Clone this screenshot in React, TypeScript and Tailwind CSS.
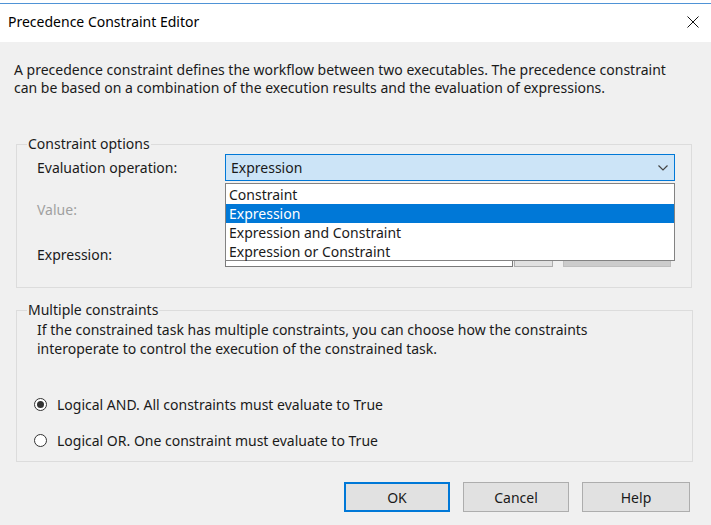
import { useState } from 'react'

const options = ['Constraint', 'Expression', 'Expression and Constraint', 'Expression or Constraint']

function Radio({ checked, label }: { checked: boolean; label: string }) {
  return (
    <div className="flex items-center h-[20px]">
      <span className="ml-[17px] w-[13px] h-[13px] rounded-full border border-[#333] bg-white flex items-center justify-center">
        {checked && <span className="w-[7px] h-[7px] rounded-full bg-[#333]"></span>}
      </span>
      <span className="ml-[10px]">{label}</span>
    </div>
  )
}

export default function App() {
  const [selected] = useState('Expression')

  return (
    <div
      className="w-[711px] h-[525px] bg-white overflow-hidden flex flex-col text-[14px] text-[#1a1a1a]"
      style={{ fontFamily: '"Noto Sans", "Open Sans", sans-serif' }}
    >
      {/* Title bar */}
      <div className="mt-[3px] border-t border-[#4f93d6] h-[39px] flex items-center justify-between pl-[8px] pr-[12px]">
        <span className="text-black -mt-[3px]">Precedence Constraint Editor</span>
        <svg width="12" height="12" viewBox="0 0 12 12" className="-mt-[3px]">
          <path d="M0.5 0.5 L11.5 11.5 M11.5 0.5 L0.5 11.5" stroke="#111" strokeWidth="1" />
        </svg>
      </div>

      {/* Body */}
      <div className="flex-1 bg-[#f0f0f0] flex flex-col">
        <p className="pt-[19px] px-[14px] leading-[18px]">
          A precedence constraint defines the workflow between two executables. The precedence constraint
          <br />
          can be based on a combination of the execution results and the evaluation of expressions.
        </p>

        {/* Constraint options */}
        <fieldset className="mt-[38px] mx-[16px] w-[676px] h-[153px] border border-[#dcdcdc] relative">
          <legend className="ml-[10px] px-[1px] leading-[18px]">Constraint options</legend>
          <div className="flex items-center h-[27px] mt-[1px]">
            <span className="ml-[20px] w-[188px]">Evaluation operation:</span>
            <div className="w-[450px] h-[27px] bg-[#cce4f7] border border-[#0078d7] flex items-center justify-between pl-[5px] pr-[6px]">
              <span>{selected}</span>
              <svg width="10" height="6" viewBox="0 0 10 6">
                <path d="M0.5 0.5 L5 5 L9.5 0.5" stroke="#444" strokeWidth="1.2" fill="none" />
              </svg>
            </div>
          </div>
          <div className="flex items-center h-[20px] mt-[18px]">
            <span className="ml-[20px] text-[#a0a0a0]">Value:</span>
          </div>
          <div className="flex items-center h-[26px] mt-[22px]">
            <span className="ml-[20px] w-[188px]">Expression:</span>
            <div className="w-[288px] h-[26px] bg-white border border-[#7a7a7a]"></div>
            <div className="ml-[1px] w-[39px] h-[26px] bg-[#e1e1e1] border border-[#adadad]"></div>
            <div className="ml-[10px] w-[108px] h-[26px] bg-[#cccccc] border border-[#bfbfbf]"></div>
          </div>

          {/* Open dropdown list */}
          <div className="absolute left-[208px] top-[30px] w-[450px] h-[78px] bg-white border border-[#828282] pt-[1px]">
            {options.map((o) => (
              <div
                key={o}
                className={`h-[19px] leading-[19px] pl-[3px] ${o === selected ? 'bg-[#0078d7] text-white' : ''}`}
              >
                {o}
              </div>
            ))}
          </div>
        </fieldset>

        {/* Multiple constraints */}
        <fieldset className="mt-[13px] mx-[16px] w-[677px] h-[161px] border border-[#dcdcdc]">
          <legend className="ml-[10px] px-[1px] leading-[18px]">Multiple constraints</legend>
          <p className="mt-[1px] ml-[20px] leading-[19px]">
            If the constrained task has multiple constraints, you can choose how the constraints
            <br />
            interoperate to control the execution of the constrained task.
          </p>
          <div className="mt-[36px] flex flex-col gap-[16px]">
            <Radio checked label="Logical AND. All constraints must evaluate to True" />
            <Radio checked={false} label="Logical OR. One constraint must evaluate to True" />
          </div>
        </fieldset>

        {/* Buttons */}
        <div className="mt-[20px] flex pl-[344px] gap-[13px]">
          <button className="w-[106px] h-[30px] bg-[#e1e1e1] border-2 border-[#0078d7]">OK</button>
          <button className="w-[106px] h-[30px] bg-[#e1e1e1] border border-[#adadad]">Cancel</button>
          <button className="w-[108px] h-[30px] bg-[#e1e1e1] border border-[#adadad]">Help</button>
        </div>
      </div>
    </div>
  )
}
